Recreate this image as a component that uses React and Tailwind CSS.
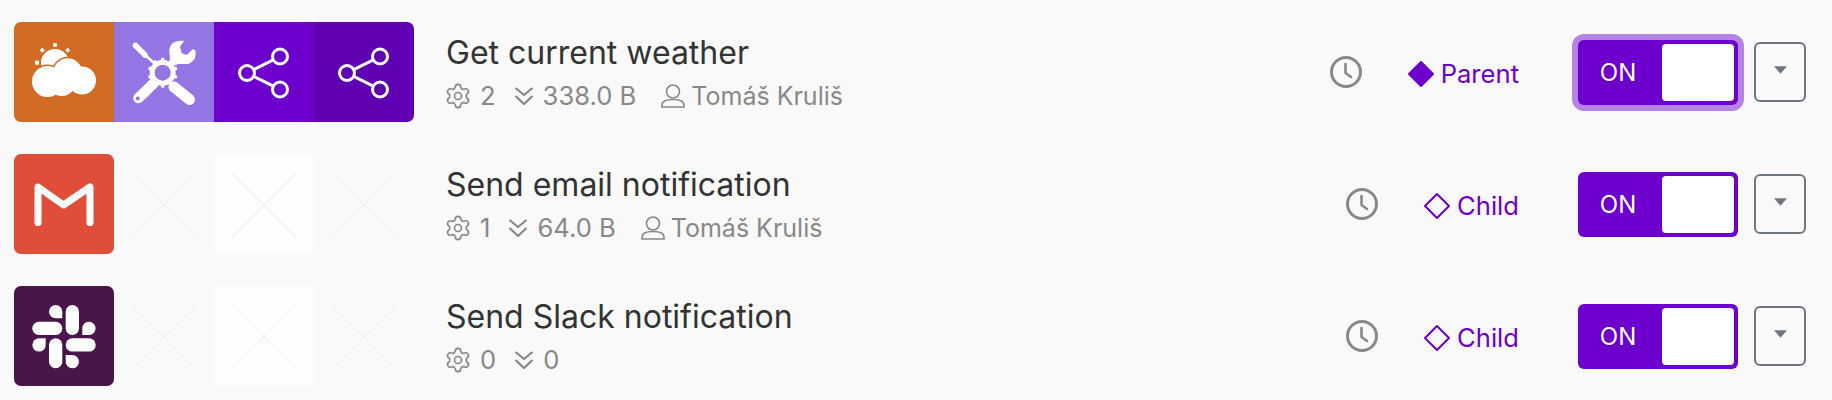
import React from 'react';
import { Settings } from 'lucide-react';

function WeatherIcon() {
  return (
    <svg viewBox="0 0 100 100" className="w-full h-full" fill="#fff">
      <rect x="39.2" y="21.2" width="3.6" height="3.6" />
      <rect x="26.5" y="26.5" width="3.6" height="3.6" transform="rotate(45 28.3 28.3)" />
      <rect x="51.9" y="26.5" width="3.6" height="3.6" transform="rotate(45 53.7 28.3)" />
      <rect x="21" y="38.7" width="4" height="4" />
      <circle cx="41" cy="41" r="14" />
      <g stroke="#d26c24" strokeWidth="3">
        <circle cx="33.5" cy="59.5" r="15.5" />
        <circle cx="53.7" cy="50.7" r="14.5" />
      </g>
      <circle cx="33.5" cy="59.5" r="15.5" />
      <circle cx="53.7" cy="50.7" r="14.5" />
      <circle cx="68" cy="58.5" r="14" />
      <circle cx="47.7" cy="60" r="14" />
      <rect x="34" y="50" width="34" height="18" />
    </svg>
  );
}

function ToolsIcon() {
  const teeth = [0, 36, 72, 108, 144, 180, 216, 252, 288, 324];
  return (
    <svg viewBox="0 0 100 100" className="w-full h-full" fill="none" stroke="#fff">
      <path d="M21.5 23.5 L31 33" strokeWidth="5.5" strokeLinecap="round" />
      <path d="M29 31 L40 41" strokeWidth="2.5" />
      <path d="M39.5 61.5 L24.5 76" strokeWidth="10.5" strokeLinecap="round" />
      <circle cx="23.7" cy="76.5" r="2" fill="#9575e4" stroke="none" />
      <path d="M60 65 L75.5 77.5" strokeWidth="11" strokeLinecap="round" />
      <circle cx="48.7" cy="50.7" r="10.5" strokeWidth="5" />
      {teeth.map((a) => (
        <rect key={a} x="47" y="35.8" width="3.4" height="3.4" fill="#fff" stroke="none" transform={`rotate(${a} 48.7 50.7)`} />
      ))}
      <path
        d="M56 37.5 L55.3 28 C56 24 57 22 59.3 20.7 C62 19 66 18.5 70.3 18.7 L66 24.7 L67.7 31.3 L72.7 33 L78.7 27.3 L81.3 28 C82 31 81.5 34 81 36.3 C79 39 77 41 74.3 42 L64.3 42 L59.3 44 L55.3 39 Z"
        fill="#fff"
        stroke="none"
      />
    </svg>
  );
}

function ShareIcon() {
  return (
    <svg viewBox="0 0 100 100" className="w-full h-full" fill="none" stroke="#fff" strokeWidth="3">
      <circle cx="66" cy="34.5" r="7.5" />
      <circle cx="33" cy="51" r="7.5" />
      <circle cx="66" cy="67.5" r="7.5" />
      <path d="M39.7 47.6 L59.3 37.9 M39.7 54.4 L59.3 64.1" />
    </svg>
  );
}

function GmailIcon() {
  return (
    <svg viewBox="0 0 100 100" className="w-full h-full" fill="none" stroke="#fff" strokeWidth="7" strokeLinecap="round" strokeLinejoin="round">
      <path d="M24 68.5 V33 L49.5 51 L76 33 V68.5" />
    </svg>
  );
}

function SlackIcon() {
  return (
    <svg viewBox="0 0 100 100" className="w-full h-full" fill="#fff">
      <rect x="51.7" y="19" width="13.3" height="30" rx="6.65" />
      <rect x="18.3" y="35.7" width="30" height="13.3" rx="6.65" />
      <rect x="51.7" y="52.3" width="30" height="13.3" rx="6.65" />
      <rect x="35" y="52.3" width="13.3" height="30" rx="6.65" />
      <path d="M48.3 32.3 H41.6 A6.65 6.65 0 1 1 48.3 25.6 Z" />
      <path d="M68.3 49 V42.3 A6.65 6.65 0 1 1 75 49 Z" />
      <path d="M51.7 69 H58.4 A6.65 6.65 0 1 1 51.7 75.6 Z" />
      <path d="M31.7 52.3 V59 A6.65 6.65 0 1 1 25 52.3 Z" />
    </svg>
  );
}

function PlaceholderIcon() {
  return (
    <svg viewBox="0 0 100 100" className="w-full h-full" fill="none" stroke="#e6e6e6" strokeWidth="0.8">
      <path d="M18 19 L82 83 M82 19 L18 83" />
    </svg>
  );
}

function ClockIcon() {
  return (
    <svg viewBox="0 0 32 32" className="w-8 h-8 shrink-0" fill="none" stroke="#888888" strokeWidth="3">
      <circle cx="16" cy="16" r="14.5" />
      <path d="M15.5 8 V17 L21 21" strokeWidth="2.6" strokeLinecap="round" strokeLinejoin="round" />
    </svg>
  );
}

function DiamondIcon({ filled }) {
  return (
    <svg viewBox="0 0 28 28" className="w-7 h-7 shrink-0" fill={filled ? '#6d00cc' : 'none'} stroke="#6d00cc" strokeWidth="2" strokeLinejoin="round">
      <path d="M14 2 L26 14 L14 26 L2 14 Z" />
    </svg>
  );
}

function SizeIcon() {
  return (
    <svg viewBox="0 0 20 20" className="w-5 h-5 shrink-0 ml-[18px]" fill="none" stroke="#888888" strokeWidth="2.2" strokeLinejoin="round">
      <path d="M1.5 2 L10 9 L18.5 2 M1.5 10 L10 18 L18.5 10" />
    </svg>
  );
}

function AuthorIcon() {
  return (
    <svg viewBox="0 0 24 24" className="w-6 h-6 shrink-0 ml-[25px]" fill="none" stroke="#888888" strokeWidth="1.6">
      <circle cx="12" cy="7.5" r="6.5" />
      <path d="M1 23 V21 C1 17 6 15.5 12 15.5 C18 15.5 23 17 23 21 V23 Z" />
    </svg>
  );
}

function Row({ title, icons, steps, size, author, filled, badge, focused }) {
  return (
    <div className="flex h-[100px] items-center">
      <div className="flex shrink-0">
        {icons.map((ic, i) => (
          <div key={i} className={`w-[100px] h-[100px] ${ic.bg}`}>
            {ic.el}
          </div>
        ))}
      </div>
      <div className="flex-1 ml-[32px]">
        <div className="text-[32px] leading-[44px] text-[#333333]">{title}</div>
        <div className="flex items-center text-[25.6px] leading-[36px] text-[#888888] mt-[3px]">
          <Settings size={28} strokeWidth={1.4} className="-mx-[2px]" />
          <span className="ml-[10px]">{steps}</span>
          <SizeIcon />
          <span className="ml-[9px]">{size}</span>
          {author && (
            <>
              <AuthorIcon />
              <span className="ml-[6px] text-[25px]">{author}</span>
            </>
          )}
        </div>
      </div>
      <ClockIcon />
      <div className="flex items-center ml-[45px] mt-[4px] text-[25.6px] text-[#6d00cc]">
        <DiamondIcon filled={filled} />
        <span className="ml-[6px]">{badge}</span>
      </div>
      <div className={`flex ml-[59px] w-[160px] h-[65px] p-[4px] rounded-[6px] bg-[#6d00cc] ${focused ? 'ring-[6px] ring-[#b584e6]' : ''}`}>
        <span className="w-[72px] text-center text-white text-[24px] leading-[57px]">ON</span>
        <span className="w-[72px] h-[57px] ml-auto bg-white rounded-[4px]" />
      </div>
      <button className="flex items-center justify-center ml-[16px] mr-[26px] w-[52px] h-[60px] border-2 border-[#6e7780] rounded-[6px]">
        <svg viewBox="0 0 14 8" className="w-[13px] h-[8px] -mt-[5px]" fill="#6e7780">
          <path d="M0 0 H14 L7 8 Z" />
        </svg>
      </button>
    </div>
  );
}

const blanks = [
  { bg: 'bg-[#fafafa]', el: <PlaceholderIcon /> },
  { bg: 'bg-[#fdfdfd]', el: <PlaceholderIcon /> },
  { bg: 'bg-[#fafafa]', el: <PlaceholderIcon /> },
];

export default function App() {
  return (
    <div className="w-[1832px] h-[400px] overflow-hidden bg-[#f9f9f9] pt-[22px] pl-[14px] flex flex-col gap-[32px] font-['Inter',sans-serif]">
      <Row
        title="Get current weather"
        steps="2"
        size="338.0 B"
        author="Tomáš Kruliš"
        badge="Parent"
        filled
        focused
        icons={[
          { bg: 'bg-[#d26c24] rounded-l-[7px]', el: <WeatherIcon /> },
          { bg: 'bg-[#9575e4]', el: <ToolsIcon /> },
          { bg: 'bg-[#6d00cc]', el: <ShareIcon /> },
          { bg: 'bg-[#5f00b3] rounded-r-[7px]', el: <ShareIcon /> },
        ]}
      />
      <Row
        title="Send email notification"
        steps="1"
        size="64.0 B"
        author="Tomáš Kruliš"
        badge="Child"
        icons={[{ bg: 'bg-[#e04e39] rounded-[7px]', el: <GmailIcon /> }, ...blanks]}
      />
      <Row
        title="Send Slack notification"
        steps="0"
        size="0"
        badge="Child"
        icons={[{ bg: 'bg-[#4a154b] rounded-[7px]', el: <SlackIcon /> }, ...blanks]}
      />
    </div>
  );
}
